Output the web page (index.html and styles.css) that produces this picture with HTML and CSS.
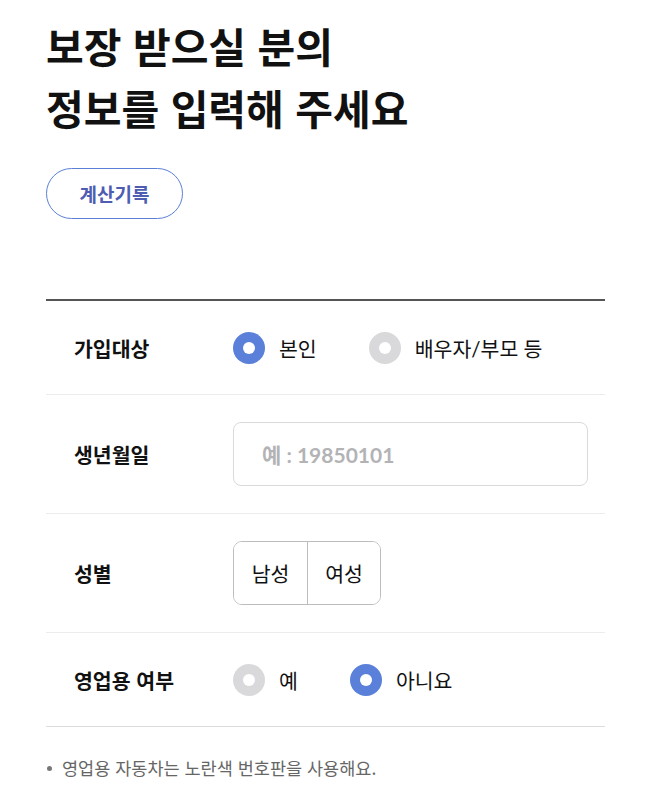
FILE: index.html
```html
<!DOCTYPE html>
<html lang="ko">
<head>
<meta charset="utf-8">
<link rel="stylesheet" href="styles.css">
</head>
<body>
<main class="page">
  <h1 class="title">보장 받으실 분의<br>정보를 입력해 주세요</h1>
  <button class="history-btn" type="button">계산기록</button>

  <section class="form">
    <div class="row row-short">
      <div class="label">가입대상</div>
      <div class="options">
        <label class="option"><span class="radio on"></span><span>본인</span></label>
        <label class="option"><span class="radio"></span><span>배우자/부모 등</span></label>
      </div>
    </div>
    <div class="row row-tall">
      <div class="label">생년월일</div>
      <input class="text-input" type="text" placeholder="예 : 19850101">
    </div>
    <div class="row row-tall">
      <div class="label">성별</div>
      <div class="segment">
        <button class="seg" type="button">남성</button>
        <button class="seg" type="button">여성</button>
      </div>
    </div>
    <div class="row row-short">
      <div class="label">영업용 여부</div>
      <div class="options">
        <label class="option"><span class="radio"></span><span>예</span></label>
        <label class="option"><span class="radio on"></span><span>아니요</span></label>
      </div>
    </div>
  </section>

  <ul class="notes">
    <li>영업용 자동차는 노란색 번호판을 사용해요.</li>
  </ul>
</main>
</body>
</html>
```

FILE: styles.css
```css
* { box-sizing: border-box; }
html, body { margin: 0; padding: 0; background: #fff; }
body {
  font-family: Lato, "Noto Sans CJK KR", sans-serif;
  color: #111;
}
.page {
  width: 605px;
  padding: 14px 0 0 46px;
}
.title {
  margin: 0;
  font-family: "Noto Sans CJK KR", sans-serif;
  font-size: 41px;
  line-height: 62px;
  font-weight: 700;
  color: #111;
}
.history-btn {
  display: block;
  margin-top: 30px;
  width: 137px;
  height: 51px;
  border: 1px solid #5b7fd6;
  border-radius: 26px;
  background: #fff;
  color: #4e5db2;
  font-family: "Noto Sans CJK KR", sans-serif;
  font-size: 19px;
  font-weight: 700;
  padding: 0;
}
.form {
  margin-top: 80px;
  border-top: 2px solid #555;
}
.row {
  display: flex;
  align-items: center;
  padding: 0 0 0 28px;
  border-bottom: 1px solid #ececec;
}
.row:last-child { border-bottom-color: #dcdcdc; }
.row-short { height: 94px; }
.row-tall { height: 119px; }
.label {
  width: 159px;
  flex: none;
  font-family: "Noto Sans CJK KR", sans-serif;
  font-size: 20.5px;
  font-weight: 700;
  color: #111;
}
.options {
  display: flex;
  align-items: center;
  gap: 52px;
  height: 38px;
}
.option {
  display: flex;
  align-items: center;
  gap: 14px;
  font-family: Lato, "Noto Sans CJK KR", sans-serif;
  font-size: 20.5px;
  color: #111;
}
.radio {
  width: 32px;
  height: 32px;
  border-radius: 50%;
  background: #d9d9db;
  display: flex;
  align-items: center;
  justify-content: center;
}
.radio::after {
  content: "";
  width: 12px;
  height: 12px;
  border-radius: 50%;
  background: #fff;
}
.radio.on { background: #5a80d9; }
.text-input {
  width: 355px;
  height: 64px;
  border: 1px solid #dadada;
  border-radius: 8px;
  padding: 0 0 0 28px;
  font-family: Lato, "Noto Sans CJK KR", sans-serif;
  font-size: 21px;
  font-weight: 700;
  color: #111;
  outline: none;
}
.text-input::placeholder { color: #b3b3b6; }
.segment {
  display: flex;
  height: 64px;
  border: 1px solid #bdbdbd;
  border-radius: 9px;
  overflow: hidden;
}
.seg {
  width: 73px;
  height: 100%;
  border: 0;
  background: #fff;
  padding: 0;
  font-family: "Noto Sans CJK KR", sans-serif;
  font-size: 20.5px;
  color: #111;
}
.seg + .seg { border-left: 1px solid #bdbdbd; }
.notes {
  list-style: none;
  margin: 28px 0 0;
  padding: 0;
}
.notes li {
  position: relative;
  padding-left: 16px;
  font-family: "Noto Sans CJK KR", sans-serif;
  font-size: 17.5px;
  line-height: 26px;
  color: #666;
}
.notes li::before {
  content: "";
  position: absolute;
  left: 1px;
  top: 11px;
  width: 5px;
  height: 5px;
  border-radius: 50%;
  background: #777;
}
```
